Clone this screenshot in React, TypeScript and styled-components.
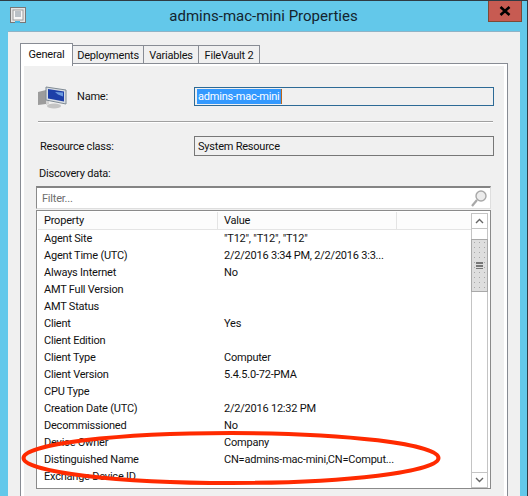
import React from "react";
import styled, { createGlobalStyle } from "styled-components";

const GlobalStyle = createGlobalStyle`
    html, body {
        margin: 0;
        padding: 0;
        background: #63c8ea;
    }
    * {
        box-sizing: border-box;
    }
`;

const Window = styled.div`
    position: relative;
    width: 528px;
    height: 496px;
    overflow: hidden;
    background: #63c8ea;
    border-top: 1px solid #2f3b44;
    border-right: 1px solid #2f3b44;
    font-family: Roboto, "Liberation Sans", Arial, sans-serif;
    font-size: 11px;
    letter-spacing: -0.22px;
    color: #111;
`;

const TitleBar = styled.div`
    position: relative;
    display: flex;
    align-items: center;
    justify-content: center;
    height: 30px;
    font-size: 15px;
    letter-spacing: 0;
    color: #14242f;
`;

const AppIcon = styled.svg`
    position: absolute;
    left: 10px;
    top: 6px;
`;

const CloseButton = styled.div`
    position: absolute;
    right: 5px;
    top: 0;
    width: 34px;
    height: 21px;
    display: flex;
    align-items: center;
    justify-content: center;
    background: #c75b52;
    border: 1px solid #7c4a36;
    border-top: 0;
`;

const Client = styled.div`
    margin-left: 8px;
    margin-right: 7px;
    height: 470px;
    padding: 11px 12px 0;
    background: #f0f0f0;
    border-top: 1px solid #8fb3c6;
`;

const TabStrip = styled.div`
    display: flex;
    align-items: flex-start;
    height: 20px;
`;

const Tab = styled.div<{ $active?: boolean; $width: number }>`
    position: relative;
    z-index: ${(p) => (p.$active ? 2 : 1)};
    width: ${(p) => p.$width}px;
    height: ${(p) => (p.$active ? 23 : 19)}px;
    margin-top: ${(p) => (p.$active ? 0 : 2)}px;
    padding-top: ${(p) => (p.$active ? 4 : 3)}px;
    text-align: center;
    background: ${(p) => (p.$active ? "#fff" : "#f0f0f0")};
    border: 1px solid #888c94;
    border-left-width: ${(p) => (p.$active ? 1 : 0)}px;
    border-bottom-width: ${(p) => (p.$active ? 0 : 1)}px;
`;

const Panel = styled.div`
    height: 440px;
    border: 1px solid #888c94;
    background: #f0f0f0;
`;

const PanelInner = styled.div`
    height: 100%;
    padding: 0 10px 0 12px;
    border-style: solid;
    border-color: #fff;
    border-width: 2px 3px 0;
`;

const NameRow = styled.div`
    display: grid;
    grid-template-columns: 41px 117px 300px;
    align-items: center;
    height: 19px;
    margin-top: 17px;
`;

const Computer = styled.svg`
    margin-left: 1px;
`;

const NameInput = styled.div`
    display: flex;
    align-items: center;
    height: 19px;
    padding-left: 2px;
    border: 1px solid #2d6a96;
`;

const Selected = styled.span`
    height: 15px;
    line-height: 15px;
    padding: 0 1px 0 1px;
    background: #3399ff;
    color: #fff;
    border-right: 1px solid #b8651b;
`;

const Separator = styled.div`
    height: 2px;
    margin: 19px 1px 0 2px;
    background: #a0a0a0;
    border-bottom: 1px solid #fff;
`;

const ResourceRow = styled.div`
    display: grid;
    grid-template-columns: 158px 300px;
    align-items: center;
    height: 20px;
    margin-top: 13px;
`;

const FieldLabel = styled.div`
    padding-left: 4px;
`;

const ReadOnlyBox = styled.div`
    display: flex;
    align-items: center;
    height: 20px;
    padding-left: 3px;
    border: 1px solid #777;
`;

const SectionLabel = styled.div`
    height: 16px;
    line-height: 16px;
    margin-top: 10px;
    padding-left: 3px;
`;

const FilterBox = styled.div`
    display: flex;
    align-items: center;
    justify-content: space-between;
    width: 455px;
    height: 23px;
    margin-top: 4px;
    padding: 0 3px 0 5px;
    background: #fff;
    border-style: solid;
    border-width: 2px 1px 1px 1px;
    border-color: #848484 #dedede #dedede #8a8a8a;
    color: #6d6d6d;
`;

const ListBox = styled.div`
    display: flex;
    width: 455px;
    height: 279px;
    margin-top: 1px;
    padding: 1px 1px 0 1px;
    background: #fff;
    border: 1px solid #8a8a8a;
`;

const PropertyTable = styled.div`
    flex: 1;
    min-width: 0;
`;

const HeaderRow = styled.div`
    display: grid;
    grid-template-columns: 180px 179px 1fr;
    height: 18px;
    background: #fcfcfc;
    border-bottom: 1px solid #e4e4e4;
`;

const HeaderCell = styled.div`
    height: 17px;
    line-height: 17px;
    padding-left: 6px;
    border-right: 1px solid #e4e4e4;
    &:last-child {
        border-right: 0;
    }
`;

const Row = styled.div`
    display: grid;
    grid-template-columns: 180px 1fr;
    height: 17px;
    line-height: 17px;
`;

const Cell = styled.div`
    padding-left: 6px;
    white-space: nowrap;
    overflow: hidden;
`;

const ScrollBar = styled.div`
    display: flex;
    flex-direction: column;
    width: 17px;
    margin-right: 1px;
    padding-top: 1px;
`;

const ScrollButton = styled.div`
    display: flex;
    align-items: center;
    justify-content: center;
    flex: none;
    width: 17px;
    height: 16px;
    border: 1px solid #c4c4c4;
`;

const ScrollTrack = styled.div`
    flex: 1;
    padding-top: 10px;
    border-style: solid;
    border-color: #c4c4c4;
    border-width: 0 1px;
`;

const ScrollThumb = styled.div`
    display: flex;
    align-items: center;
    justify-content: center;
    width: 17px;
    height: 53px;
    margin-left: -1px;
    border: 1px solid #a9a9a9;
    background-color: #dedede;
    background-image: radial-gradient(#a8a8a8 0.6px, transparent 0.9px);
    background-size: 5px 5px;
`;

const Gripper = styled.div`
    width: 7px;
    height: 7px;
    background: repeating-linear-gradient(#777 0 2px, #dedede 2px 3px);
`;

const RedCircle = styled.svg`
    position: absolute;
    left: 0;
    top: 0;
    pointer-events: none;
`;

const rows = [
    ["Agent Site", '"T12", "T12", "T12"'],
    ["Agent Time (UTC)", "2/2/2016 3:34 PM, 2/2/2016 3:3..."],
    ["Always Internet", "No"],
    ["AMT Full Version", ""],
    ["AMT Status", ""],
    ["Client", "Yes"],
    ["Client Edition", ""],
    ["Client Type", "Computer"],
    ["Client Version", "5.4.5.0-72-PMA"],
    ["CPU Type", ""],
    ["Creation Date (UTC)", "2/2/2016 12:32 PM"],
    ["Decommissioned", "No"],
    ["Device Owner", "Company"],
    ["Distinguished Name", "CN=admins-mac-mini,CN=Comput..."],
    ["Exchange Device ID", ""],
];

const App = () => {
    return (
        <Window>
            <GlobalStyle />
            <TitleBar>
                <AppIcon width="16" height="17" viewBox="0 0 16 17">
                    <rect x="0.5" y="0.5" width="15" height="15" fill="#e4e4e4" stroke="#777" />
                    <rect x="3" y="3" width="10" height="10" fill="#f7f7f7" stroke="#9a9a9a" />
                    <path d="M5 5h6M5 7h6M5 9h6" stroke="#7c8a96" />
                    <rect x="5" y="14" width="5" height="2" fill="#3fb4e4" />
                </AppIcon>
                admins-mac-mini Properties
                <CloseButton>
                    <svg width="12" height="10" viewBox="0 0 12 10">
                        <path d="M1.5 1l9 8M10.5 1l-9 8" stroke="#000" strokeWidth="2.6" />
                    </svg>
                </CloseButton>
            </TitleBar>
            <Client>
                <TabStrip>
                    <Tab $active $width={53}>General</Tab>
                    <Tab $width={71}>Deployments</Tab>
                    <Tab $width={55}>Variables</Tab>
                    <Tab $width={61}>FileVault 2</Tab>
                </TabStrip>
                <Panel>
                    <PanelInner>
                        <NameRow>
                            <Computer width="30" height="26" viewBox="0 0 30 26">
                                <path d="M1 9l8-2v14l-8 1z" fill="#9c9c9c" />
                                <path d="M9 7l3 1v13l-3 1z" fill="#d4d4d4" />
                                <path d="M9 4l20 3v14L9 17z" fill="#d8dde2" stroke="#7f8a94" />
                                <path d="M11 6l16 2.5v10L11 15.5z" fill="#1d3fa8" />
                                <path d="M18 9l8 0.5v4l-5-2z" fill="#6d9be0" />
                                <ellipse cx="17" cy="23" rx="7" ry="2.4" fill="#c4c4c4" />
                            </Computer>
                            <div>Name:</div>
                            <NameInput>
                                <Selected>admins-mac-mini</Selected>
                            </NameInput>
                        </NameRow>
                        <Separator />
                        <ResourceRow>
                            <FieldLabel>Resource class:</FieldLabel>
                            <ReadOnlyBox>System Resource</ReadOnlyBox>
                        </ResourceRow>
                        <SectionLabel>Discovery data:</SectionLabel>
                        <FilterBox>
                            Filter...
                            <svg width="16" height="17" viewBox="0 0 16 17">
                                <circle cx="10" cy="6" r="5" fill="#ececec" stroke="#a8a8a8" strokeWidth="1.4" />
                                <path d="M6 10l-5 6" stroke="#a8a8a8" strokeWidth="2.2" />
                            </svg>
                        </FilterBox>
                        <ListBox>
                            <PropertyTable>
                                <HeaderRow>
                                    <HeaderCell>Property</HeaderCell>
                                    <HeaderCell>Value</HeaderCell>
                                    <HeaderCell />
                                </HeaderRow>
                                {rows.map((row) => (
                                    <Row key={row[0]}>
                                        <Cell>{row[0]}</Cell>
                                        <Cell>{row[1]}</Cell>
                                    </Row>
                                ))}
                            </PropertyTable>
                            <ScrollBar>
                                <ScrollButton>
                                    <svg width="9" height="6" viewBox="0 0 9 6">
                                        <path d="M1 5l3.5-3.5L8 5" fill="none" stroke="#666" strokeWidth="1.4" />
                                    </svg>
                                </ScrollButton>
                                <ScrollTrack>
                                    <ScrollThumb>
                                        <Gripper />
                                    </ScrollThumb>
                                </ScrollTrack>
                                <ScrollButton>
                                    <svg width="9" height="6" viewBox="0 0 9 6">
                                        <path d="M1 1l3.5 3.5L8 1" fill="none" stroke="#666" strokeWidth="1.4" />
                                    </svg>
                                </ScrollButton>
                            </ScrollBar>
                        </ListBox>
                    </PanelInner>
                </Panel>
            </Client>
            <RedCircle width="528" height="496" viewBox="0 0 528 496">
                <ellipse cx="231" cy="457" rx="207.5" ry="25" fill="none" stroke="#ff2a00" strokeWidth="4" />
            </RedCircle>
        </Window>
    );
};

export default App;
